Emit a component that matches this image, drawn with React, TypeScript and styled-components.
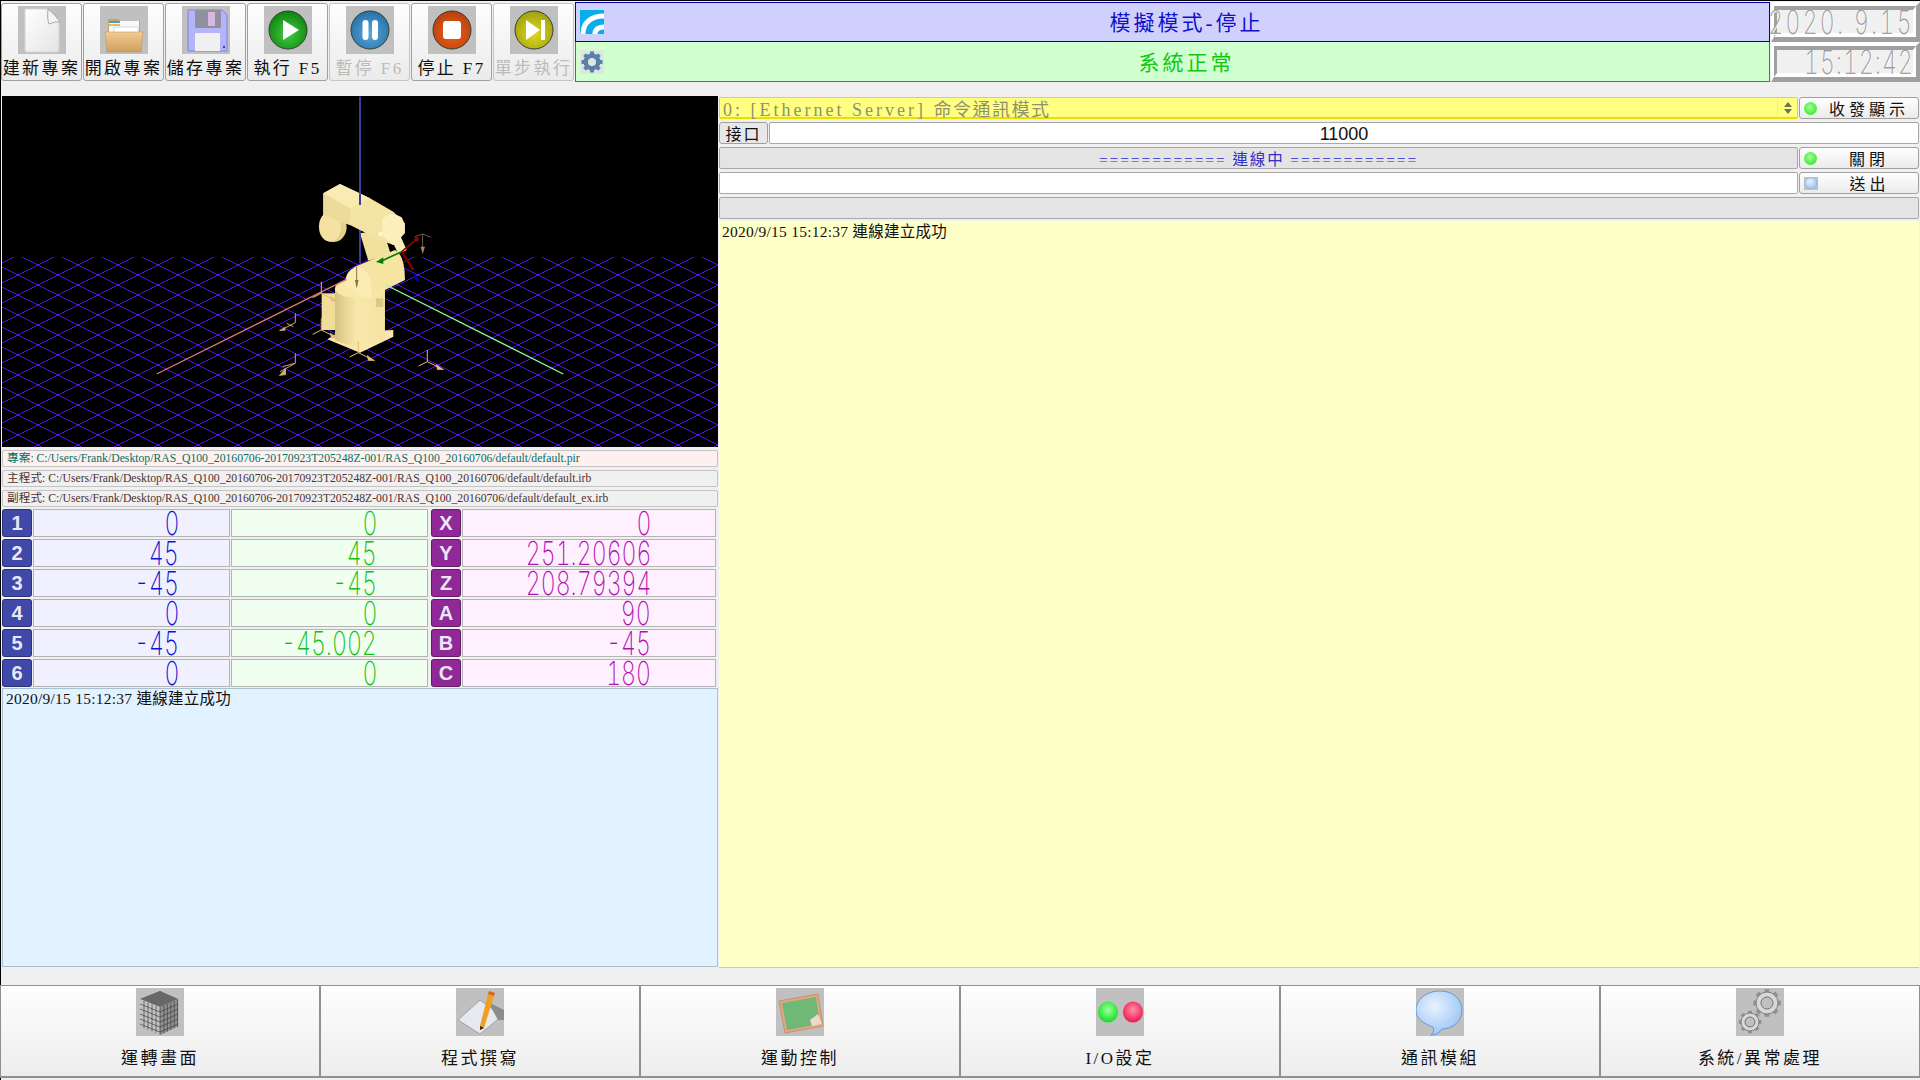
import React from 'react';
import styled, { createGlobalStyle } from 'styled-components';

const FONT = '"Liberation Serif", "Noto Sans CJK TC", serif';

const GlobalStyle = createGlobalStyle`
  html, body {
    margin: 0;
    padding: 0;
    background: #f0f0f0;
    overflow: hidden;
  }
  * { box-sizing: border-box; }
`;

const Page = styled.div`
  width: 1920px;
  height: 1080px;
  display: flex;
  flex-direction: column;
  background: #f0f0f0;
  font-family: ${FONT};
  border-left: 1px solid #000;
  border-top: 1px solid #000;
`;

/* ---- top bar ---- */
const TopBar = styled.div`
  height: 95px;
  display: flex;
  align-items: flex-start;
  flex: none;
`;

const ToolGroup = styled.div`
  display: flex;
  gap: 1px;
  padding-top: 2px;
`;

const ToolButton = styled.div<{ $disabled?: boolean }>`
  width: 81px;
  height: 78px;
  display: flex;
  flex-direction: column;
  align-items: center;
  padding-top: 2px;
  border: 1px solid ${p => (p.$disabled ? '#c4c4c4' : '#a0a0a0')};
  border-radius: 3px;
  background: linear-gradient(#fefefe, #ebebeb);
  color: ${p => (p.$disabled ? '#bbbbbb' : '#101010')};
  font-size: 17px;
  line-height: 20px;
  letter-spacing: 2.4px;
  white-space: nowrap;
  overflow: hidden;
`;

const IconBox = styled.div<{ $gap?: number }>`
  width: 48px;
  height: 48px;
  background: #c0c0c0;
  flex: none;
  margin-bottom: ${p => p.$gap ?? 3}px;
  svg { display: block; }
`;

const StatusColumn = styled.div`
  width: 1196px;
  margin-left: 1px;
  padding-top: 1px;
  display: flex;
  flex-direction: column;
`;

const StatusBar = styled.div<{ $tone: 'blue' | 'green' }>`
  height: 40px;
  display: flex;
  align-items: center;
  padding-left: 4px;
  border: 1px solid ${p => (p.$tone === 'blue' ? '#0000b0' : '#00b000')};
  border-width: ${p => (p.$tone === 'blue' ? '1px' : '0 1px 1px')};
  background: ${p => (p.$tone === 'blue' ? '#d0d0ff' : '#d0ffd0')};
  color: ${p => (p.$tone === 'blue' ? '#1010c8' : '#10c810')};
  font-size: 21px;
  letter-spacing: 3px;
`;

const StatusText = styled.div`
  flex: 1;
  text-align: center;
  padding-bottom: 2px;
`;

const ClockColumn = styled.div`
  margin-left: 1px;
  padding-top: 1px;
  width: 149px;
  display: flex;
  flex-direction: column;
`;

const ClockFrame = styled.div`
  height: 40px;
  border-style: solid;
  border-width: 4px 4px 5px 3px;
  border-color: #ffffff #a0a0a0 #a0a0a0 #ffffff;
`;

const Clock = styled.div`
  height: 100%;
  display: flex;
  align-items: center;
  justify-content: flex-end;
  border-style: solid;
  border-width: 4px 3px 4px 3px;
  border-color: #a0a0a0 #ffffff #ffffff #a0a0a0;
`;

const LcdText = styled.span<{ $color: string; $size?: number; $spacing?: number; $inset?: number }>`
  display: inline-block;
  font-family: Inter, "Liberation Sans", sans-serif;
  font-weight: 200;
  font-variant-numeric: tabular-nums;
  font-size: ${p => p.$size ?? 33}px;
  line-height: 26px;
  letter-spacing: ${p => p.$spacing ?? 0}px;
  margin-right: ${p => p.$inset ?? 0}px;
  color: ${p => p.$color};
  transform: scaleX(0.7);
  transform-origin: right center;
  white-space: pre;
`;

const ClockDigits = styled(LcdText)`
  text-shadow: 1px 1px 0 #ffffff;
`;

/* ---- main ---- */
const Main = styled.div`
  flex: none;
  height: 872px;
  display: flex;
  padding-left: 1px;
`;

const LeftColumn = styled.div`
  width: 716px;
  display: flex;
  flex-direction: column;
`;

const ViewPort = styled.div`
  height: 351px;
  background: #000;
  flex: none;
  svg { display: block; }
`;

const PathList = styled.div`
  display: flex;
  flex-direction: column;
  gap: 3px;
  padding-top: 3px;
`;

const PathRow = styled.div<{ $bg: string; $color: string }>`
  height: 17px;
  line-height: 15px;
  padding-left: 4px;
  border: 1px solid #c4c4c4;
  border-radius: 2px;
  background: ${p => p.$bg};
  color: ${p => p.$color};
  font-size: 11.7px;
  white-space: nowrap;
  overflow: hidden;
`;

const AxisTable = styled.div`
  display: grid;
  grid-template-columns: 30px 197px 197px 32px 254px;
  grid-auto-rows: 28px;
  column-gap: 1px;
  row-gap: 2px;
  padding-top: 2px;
`;

const AxisBadge = styled.div<{ $bg: string }>`
  width: 30px;
  justify-self: end;
  display: flex;
  align-items: center;
  justify-content: center;
  background: ${p => p.$bg};
  border: 1px solid rgba(0, 0, 0, 0.3);
  border-radius: 3px;
  color: #e8e8f4;
  font-family: "Liberation Sans", sans-serif;
  font-weight: 700;
  font-size: 20px;
`;

const AxisCell = styled.div<{ $bg: string; $pad: number }>`
  display: flex;
  align-items: center;
  justify-content: flex-end;
  padding-right: ${p => p.$pad}px;
  background: ${p => p.$bg};
  border: 1px solid #b4b4b4;
`;

const LeftLog = styled.div`
  height: 279px;
  margin-top: 1px;
  padding: 1px 3px;
  background: #e2f2ff;
  border: 1px solid #a8c0d0;
  font-size: 15.5px;
  letter-spacing: 0.25px;
  line-height: 18px;
  color: #101010;
`;

const RightColumn = styled.div`
  width: 1200px;
  margin-left: 1px;
  padding-top: 1px;
  display: flex;
  flex-direction: column;
  gap: 3px;
`;

const Row = styled.div`
  height: 22px;
  display: flex;
  align-items: stretch;
  gap: 1px;
  flex: none;
`;

const SelectBox = styled.div`
  flex: 1;
  display: flex;
  align-items: center;
  padding-left: 3px;
  border: 1px solid #d8d060;
  border-bottom: 2px solid #e8e000;
  border-radius: 2px;
  background: #ffff80;
  color: #909070;
  font-size: 18px;
  letter-spacing: 1.5px;
  white-space: nowrap;
`;

const SelectLabel = styled.span`
  flex: 1;
`;

const SelectLatin = styled.span`
  letter-spacing: 3px;
`;

const SelectArrows = styled.span`
  width: 20px;
  height: 100%;
  display: flex;
  align-items: center;
  justify-content: center;
  border-left: 1px solid #eeee90;
`;

const SideButton = styled.div`
  width: 120px;
  flex: none;
  display: flex;
  align-items: center;
  padding-left: 4px;
  border: 1px solid #a0a0a0;
  border-radius: 3px;
  background: linear-gradient(#fefefe, #ebebeb);
  font-size: 16px;
  color: #101010;
`;

const SideLabel = styled.span`
  flex: 1;
  text-align: center;
  padding-left: 3px;
  letter-spacing: 4px;
  white-space: nowrap;
`;

const Led = styled.span`
  width: 13px;
  height: 13px;
  border-radius: 50%;
  background: radial-gradient(circle at 45% 40%, #a0ff90, #20e020);
  flex: none;
`;

const PortLabel = styled.div`
  width: 49px;
  flex: none;
  display: flex;
  align-items: center;
  justify-content: center;
  border: 1px solid #a0a0a0;
  border-radius: 3px;
  background: #e8e8e8;
  font-size: 16px;
  letter-spacing: 2px;
  color: #101010;
`;

const Field = styled.div<{ $grey?: boolean }>`
  flex: 1;
  display: flex;
  align-items: center;
  justify-content: center;
  border: 1px solid #a8a8a8;
  border-radius: 2px;
  background: ${p => (p.$grey ? '#e4e4e4' : '#ffffff')};
  color: #3030c8;
  font-size: 15.5px;
  letter-spacing: 1.9px;
  white-space: nowrap;
`;

const PortValue = styled.span`
  font-family: "Liberation Sans", sans-serif;
  font-size: 18px;
  letter-spacing: 0;
  color: #101010;
  padding-top: 2px;
`;

const RightLog = styled.div`
  height: 748px;
  margin-top: -1px;
  padding: 1px 3px 0;
  background: #ffffc8;
  border-bottom: 1px solid #d0d080;
  font-size: 15.5px;
  letter-spacing: 0.25px;
  line-height: 20px;
  color: #101010;
`;

/* ---- bottom tabs ---- */
const TabBar = styled.div`
  flex: none;
  height: 93px;
  margin-top: 17px;
  display: grid;
  grid-template-columns: repeat(6, 1fr);
  margin-left: -1px;
`;

const TabButton = styled.div`
  display: flex;
  flex-direction: column;
  align-items: center;
  padding-top: 2px;
  border: 1px solid #909090;
  border-bottom-width: 2px;
  background: linear-gradient(#fefefe, #ededed);
  font-size: 17px;
  letter-spacing: 2.5px;
  color: #101010;
  white-space: nowrap;
`;

const TabLabel = styled.div`
  margin-top: 10px;
  line-height: 20px;
`;

/* ---- drawings ---- */
const Defs = () => (
  <svg width="0" height="0" style={{ position: 'absolute' }}>
    <defs>
      <linearGradient id="shade" x1="0" x2="1" y1="0" y2="0">
        <stop offset="0" stopColor="#d4c080" />
        <stop offset="0.2" stopColor="#e8d694" />
        <stop offset="0.45" stopColor="#f8e8aa" />
        <stop offset="1" stopColor="#f4e2a2" />
      </linearGradient>
      <radialGradient id="green" cx="0.5" cy="0.6" r="0.6">
        <stop offset="0" stopColor="#40d040" />
        <stop offset="1" stopColor="#108010" />
      </radialGradient>
      <radialGradient id="blue" cx="0.5" cy="0.6" r="0.6">
        <stop offset="0" stopColor="#58a8d8" />
        <stop offset="1" stopColor="#2870a8" />
      </radialGradient>
      <radialGradient id="orange" cx="0.5" cy="0.6" r="0.6">
        <stop offset="0" stopColor="#f06010" />
        <stop offset="1" stopColor="#b84010" />
      </radialGradient>
      <radialGradient id="olive" cx="0.5" cy="0.6" r="0.6">
        <stop offset="0" stopColor="#e0d820" />
        <stop offset="1" stopColor="#a0a010" />
      </radialGradient>
      <linearGradient id="paper" x1="0" x2="1" y1="0" y2="1">
        <stop offset="0" stopColor="#ffffff" />
        <stop offset="1" stopColor="#e4e4e4" />
      </linearGradient>
      <linearGradient id="folder" x1="0" x2="0" y1="0" y2="1">
        <stop offset="0" stopColor="#f0cc90" />
        <stop offset="1" stopColor="#d0a060" />
      </linearGradient>
      <radialGradient id="bubble" cx="0.4" cy="0.35" r="0.7">
        <stop offset="0" stopColor="#e8f2ff" />
        <stop offset="1" stopColor="#98c4f4" />
      </radialGradient>
      <radialGradient id="ledg" cx="0.5" cy="0.4" r="0.6">
        <stop offset="0" stopColor="#a0ffa0" />
        <stop offset="1" stopColor="#10e020" />
      </radialGradient>
      <radialGradient id="ledr" cx="0.5" cy="0.4" r="0.6">
        <stop offset="0" stopColor="#ff90a8" />
        <stop offset="1" stopColor="#f01850" />
      </radialGradient>
    </defs>
  </svg>
);

const Svg48: React.FC<{ children: React.ReactNode }> = ({ children }) => (
  <svg width="48" height="48" viewBox="0 0 48 48">{children}</svg>
);

const NewIcon = () => (
  <Svg48>
    <path d="M7 3H30L41 14V44Q41 46 39 46H9Q7 46 7 44Z" fill="url(#paper)" stroke="#d4d4d4" />
    <path d="M30 3Q29 14 31 18Q37 15 42 16Q36 7 30 3Z" fill="#f4f4f4" stroke="#a8a8a8" />
  </Svg48>
);

const OpenIcon = () => (
  <Svg48>
    <path d="M8 13H18L20 15H40V30H8Z" fill="#c8a468" />
    <rect x="9" y="15" width="30" height="16" fill="#f8f8f8" />
    <rect x="9" y="15" width="11" height="2" fill="#40a0d8" />
    <rect x="9" y="18" width="11" height="2" fill="#e8c050" />
    <rect x="14" y="21" width="24" height="6" fill="#ffffff" stroke="#d8d8d8" />
    <path d="M5 26H43L41 46H7Z" fill="url(#folder)" stroke="#b89058" strokeWidth="0.5" />
  </Svg48>
);

const SaveIcon = () => (
  <Svg48>
    <path d="M6 4H40L45 9V45H6Z" fill="#b4b4f8" stroke="#8080e0" />
    <rect x="13" y="4" width="26" height="18" fill="#9090a0" />
    <rect x="26" y="6" width="7" height="14" fill="#d8b8e0" />
    <rect x="13" y="27" width="25" height="18" fill="#f0f0f0" />
    <circle cx="42" cy="41" r="1.2" fill="#4040b0" />
  </Svg48>
);

const RoundIcon: React.FC<{ fill: string; children: React.ReactNode }> = ({ fill, children }) => (
  <Svg48>
    <circle cx="24" cy="24" r="19" fill={`url(#${fill})`} stroke="#304030" strokeWidth="1" />
    {children}
  </Svg48>
);

const PlayIcon = () => (
  <RoundIcon fill="green">
    <path d="M19 14L35 24L19 34Z" fill="#fff" />
  </RoundIcon>
);
const PauseIcon = () => (
  <RoundIcon fill="blue">
    <rect x="16.5" y="14" width="6" height="20" rx="3" fill="#fff" />
    <rect x="26" y="14" width="6" height="20" rx="3" fill="#fff" />
  </RoundIcon>
);
const StopIcon = () => (
  <RoundIcon fill="orange">
    <rect x="15" y="15" width="18" height="18" rx="3" fill="#fff" />
  </RoundIcon>
);
const StepIcon = () => (
  <RoundIcon fill="olive">
    <path d="M16 14L30 24L16 34Z" fill="#fff" />
    <rect x="31" y="14" width="4" height="20" fill="#fff" />
  </RoundIcon>
);

const WifiBadge = () => (
  <svg width="24" height="24" viewBox="0 0 24 24" style={{ flex: 'none' }}>
    <rect width="24" height="24" fill="#08aeea" />
    <path d="M3 24C3 12 12 6 24 6" stroke="#fff" strokeWidth="5" fill="none" />
    <path d="M15 24C15 19 19 17 24 17" stroke="#fff" strokeWidth="5" fill="none" />
  </svg>
);

const GearBadge = () => (
  <svg width="24" height="24" viewBox="0 0 24 24" style={{ flex: 'none' }}>
    <rect width="24" height="24" fill="#dfe8df" />
    <circle cx="12" cy="12" r="6.5" fill="none" stroke="#5880a8" strokeWidth="4" />
    {[0, 45, 90, 135].map(a => (
      <rect key={a} x="10" y="1.5" width="4" height="21" fill="#5880a8" transform={`rotate(${a} 12 12)`} />
    ))}
    <circle cx="12" cy="12" r="4" fill="#dfe8df" />
  </svg>
);

const CubeIcon = () => (
  <Svg48>
    <path d="M24 3L42 11V38L24 47L4 38V11Z" fill="#8a8a8a" />
    <path d="M24 3L42 11L24 19L4 11Z" fill="#686868" />
    <path d="M4 11L24 19V47L4 38Z" fill="#c4c4c4" />
    <path d="M24 19L42 11V38L24 47Z" fill="#909090" />
    {[0, 1, 2, 3, 4].map(i => (
      <g key={i} stroke="#404040" strokeWidth="0.7">
        <path d={`M4 ${16 + i * 5}L24 ${24 + i * 5}L42 ${16 + i * 5}`} fill="none" />
        <path d={`M${8 + i * 4} ${13 + i * 1.6}V${40 + i * 1.6}`} />
        <path d={`M${28 + i * 3.4} ${17.5 - i * 1.5}V${45 - i * 1.5}`} />
      </g>
    ))}
  </Svg48>
);

const PencilIcon = () => (
  <Svg48>
    <path d="M2 32L24 12L46 28L24 46Z" fill="#e8e8f0" stroke="#a0a0a8" />
    <path d="M32 14L48 22V32L42 32Z" fill="#8c8c8c" />
    <path d="M24 38L32 6L38 8L28 40L24 42Z" fill="#f0a020" />
    <path d="M33 3L39 5L38 8L32 6Z" fill="#e06020" />
    <path d="M24 38L28 40L24 42Z" fill="#303030" />
  </Svg48>
);

const BoardIcon = () => (
  <Svg48>
    <path d="M3 13L42 6L47 38L9 45Z" fill="#e0a880" stroke="#c89070" />
    <path d="M6 15L40 9L44 36L11 42Z" fill="#70b878" />
    <path d="M34 32L42 26L46 36L36 38Z" fill="#f0d8c8" />
  </Svg48>
);

const IoIcon = () => (
  <Svg48>
    <ellipse cx="12" cy="24" rx="10" ry="10.5" fill="url(#ledg)" />
    <ellipse cx="37" cy="24" rx="10" ry="10.5" fill="url(#ledr)" />
  </Svg48>
);

const BubbleIcon = () => (
  <Svg48>
    <path d="M24 3C38 3 46 12 46 22C46 33 37 41 26 41C24 44 20 47 15 47C18 44 18 41 17 39C8 36 0 31 0 22C0 12 10 3 24 3Z" fill="url(#bubble)" stroke="#6898d8" />
  </Svg48>
);

const Cog: React.FC<{ cx: number; cy: number; r: number }> = ({ cx, cy, r }) => (
  <g>
    {[0, 45, 90, 135].map(a => (
      <rect key={a} x={cx - r * 0.22} y={cy - r * 1.25} width={r * 0.44} height={r * 2.5} fill="#909090" transform={`rotate(${a} ${cx} ${cy})`} />
    ))}
    <circle cx={cx} cy={cy} r={r} fill="#d8d8d8" stroke="#808080" />
    <circle cx={cx} cy={cy} r={r * 0.55} fill="#c0c0c0" stroke="#707070" />
  </g>
);

const GearsIcon = () => (
  <Svg48>
    <Cog cx={31} cy={15} r={11} />
    <Cog cx={14} cy={34} r={9} />
  </Svg48>
);

// ground grid, page coordinates, one crossing at (118, 265)
const gridOffsets = Array.from({ length: 60 }, (_, i) => i - 30);

const Gizmo: React.FC<{ x: number; y: number }> = ({ x, y }) => (
  <g stroke="#e8b880" strokeWidth="3" fill="none">
    <path d={`M${x} ${y}V${y - 35}`} />
    <path d={`M${x} ${y}L${x - 26} ${y + 13}`} />
    <path d={`M${x} ${y}L${x + 32} ${y + 16}`} />
    <path d={`M${x + 26} ${y + 8}L${x + 50} ${y + 24}L${x + 30} ${y + 24}Z`} fill="#e8b880" strokeWidth="1" />
  </g>
);

// robot: drawn in the 3x coordinates of a crop that starts at (100, 130)
const RobotView = () => (
  <svg width="716" height="351" viewBox="2 96 716 351">
    <defs>
      <clipPath id="floor">
        <rect x="2" y="257" width="716" height="190" />
      </clipPath>
    </defs>
    <g clipPath="url(#floor)" stroke="#4a12d8" strokeWidth="1" shapeRendering="crispEdges">
      {gridOffsets.map(i => (
        <g key={i}>
          <line x1="0" y1={206 + i * 20} x2="720" y2={566 + i * 20} />
          <line x1="0" y1={324 + i * 20} x2="720" y2={-36 + i * 20} />
        </g>
      ))}
    </g>
    <g transform="translate(100 130) scale(0.3333)">
      <line x1="780" y1="-100" x2="780" y2="400" stroke="#3c3c98" strokeWidth="6" />
      <path d="M682 628L712 610L880 600V620L780 668Z" fill="#f8e6aa" />
      <rect x="665" y="490" width="45" height="110" fill="#efdd98" />
      <path d="M705 475H855V630Q780 665 705 630Z" fill="url(#shade)" />
      <ellipse cx="780" cy="475" rx="75" ry="30" fill="#f8e8aa" />
      <rect x="828" y="505" width="22" height="26" fill="#dcc888" />
      <path d="M780 310L850 300L872 372L805 392Z" fill="#f2e09e" />
      <path d="M875 330L900 315L920 360L895 372Z" fill="#fbeeb8" />
      <path d="M765 410L885 360Q915 375 915 450L815 500L740 440Z" fill="#f6e4a2" />
      <path d="M735 465Q735 420 770 410Q810 420 815 465V505Q770 500 735 465Z" fill="#fbecb4" />
      <ellipse cx="700" cy="292" rx="40" ry="44" fill="#e4d08c" />
      <ellipse cx="690" cy="290" rx="33" ry="45" fill="#f4e2a2" />
      <path d="M670 190L720 162L810 205L880 245L915 280V310L880 345L840 330L750 285L670 255Z" fill="#f4e4a4" />
      <path d="M670 190L720 162L810 205L750 235Z" fill="#f9ebb2" />
      <path d="M750 235V285L670 255V190Z" fill="#ecdb9a" />
      <path d="M845 270Q870 240 905 262Q925 295 895 335L880 345L850 320Z" fill="#fcefbc" />
      <circle cx="842" cy="312" r="7" fill="#fff8d0" />
      <line x1="780" y1="190" x2="780" y2="225" stroke="#3c3c98" strokeWidth="6" />
      <line x1="780" y1="310" x2="780" y2="395" stroke="#3c3c98" strokeWidth="6" />
      <line x1="170" y1="732" x2="740" y2="448" stroke="#e07878" strokeWidth="4" />
      <line x1="858" y1="465" x2="1390" y2="732" stroke="#90ff98" strokeWidth="4" />
      <line x1="905" y1="365" x2="840" y2="395" stroke="#008000" strokeWidth="5" />
      <path d="M828 396L850 382L850 402Z" fill="#008000" />
      <line x1="905" y1="365" x2="950" y2="328" stroke="#900000" strokeWidth="5" />
      <circle cx="950" cy="328" r="7" fill="#900000" />
      <line x1="905" y1="365" x2="940" y2="420" stroke="#800000" strokeWidth="7" />
      <path d="M940 425L960 452L945 452Z" fill="#0000a0" />
      <line x1="770" y1="410" x2="770" y2="470" stroke="#907040" strokeWidth="3" />
      <path d="M765 450H776L770 475Z" fill="#907040" />
      <path d="M968 312V370M945 320L968 312L992 322" stroke="#a08868" strokeWidth="2" fill="none" />
      <path d="M962 350H975L968 372Z" fill="#a08868" />
      <Gizmo x={664} y={490} />
      <Gizmo x={664} y={600} />
      <Gizmo x={775} y={668} />
      <Gizmo x={982} y={695} />
      <path d="M586 550V578L540 602M560 580L580 590" stroke="#c8a878" strokeWidth="3" fill="none" />
      <path d="M536 602L556 590V602Z" fill="#c8a878" />
      <path d="M586 670V700L540 725M548 710L584 700" stroke="#c8a878" strokeWidth="3" fill="none" />
      <path d="M536 738L558 712V735Z" fill="#c8a878" />
    </g>
  </svg>
);

const SmallBubble = () => (
  <svg width="14" height="13" viewBox="0 0 14 13" style={{ flex: 'none' }}>
    <rect width="14" height="13" fill="#c0c0c0" />
    <ellipse cx="7" cy="6" rx="6" ry="5.5" fill="url(#bubble)" stroke="#80a8e0" strokeWidth="0.5" />
  </svg>
);

const tools = [
  { label: '建新專案', icon: <NewIcon /> },
  { label: '開啟專案', icon: <OpenIcon /> },
  { label: '儲存專案', icon: <SaveIcon /> },
  { label: '執行 F5', icon: <PlayIcon /> },
  { label: '暫停 F6', icon: <PauseIcon />, disabled: true },
  { label: '停止 F7', icon: <StopIcon /> },
  { label: '單步執行', icon: <StepIcon />, disabled: true },
];

const axes = [
  { id: '1', a: '0', b: '0', name: 'X', c: '0' },
  { id: '2', a: '45', b: '45', name: 'Y', c: '251.20606' },
  { id: '3', a: '-45', b: '-45', name: 'Z', c: '208.79394' },
  { id: '4', a: '0', b: '0', name: 'A', c: '90' },
  { id: '5', a: '-45', b: '-45.002', name: 'B', c: '-45' },
  { id: '6', a: '0', b: '0', name: 'C', c: '180' },
];

const tabs = [
  { label: '運轉畫面', icon: <CubeIcon /> },
  { label: '程式撰寫', icon: <PencilIcon /> },
  { label: '運動控制', icon: <BoardIcon /> },
  { label: 'I/O設定', icon: <IoIcon /> },
  { label: '通訊模組', icon: <BubbleIcon /> },
  { label: '系統/異常處理', icon: <GearsIcon /> },
];

const BASE_PATH = 'C:/Users/Frank/Desktop/RAS_Q100_20160706-20170923T205248Z-001/RAS_Q100_20160706/default/';

const App: React.FC = () => (
  <Page>
    <GlobalStyle />
    <Defs />
    <TopBar>
      <ToolGroup>
        {tools.map(t => (
          <ToolButton key={t.label} $disabled={t.disabled}>
            <IconBox $gap={5}>{t.icon}</IconBox>
            {t.label}
          </ToolButton>
        ))}
      </ToolGroup>
      <StatusColumn>
        <StatusBar $tone="blue">
          <WifiBadge />
          <StatusText>模擬模式-停止</StatusText>
        </StatusBar>
        <StatusBar $tone="green">
          <GearBadge />
          <StatusText>系統正常</StatusText>
        </StatusBar>
      </StatusColumn>
      <ClockColumn>
        <ClockFrame>
          <Clock>
            <ClockDigits $color="#a0a0a0" $size={33} $spacing={3.2} $inset={-1}>2020. 9.15</ClockDigits>
          </Clock>
        </ClockFrame>
        <ClockFrame>
          <Clock>
            <ClockDigits $color="#a0a0a0" $size={33} $spacing={1.4} $inset={-1}>15:12:42</ClockDigits>
          </Clock>
        </ClockFrame>
      </ClockColumn>
    </TopBar>
    <Main>
      <LeftColumn>
        <ViewPort>
          <RobotView />
        </ViewPort>
        <PathList>
          <PathRow $bg="#fff0f0" $color="#007060">專案: {BASE_PATH}default.pir</PathRow>
          <PathRow $bg="#f0f0f0" $color="#503030">主程式: {BASE_PATH}default.irb</PathRow>
          <PathRow $bg="#f0f0f0" $color="#503030">副程式: {BASE_PATH}default_ex.irb</PathRow>
        </PathList>
        <AxisTable>
          {axes.map(r => (
            <React.Fragment key={r.id}>
              <AxisBadge $bg="#4048a8">{r.id}</AxisBadge>
              <AxisCell $bg="#f0f0ff" $pad={50}>
                <LcdText $color="#1010d0">{r.a}</LcdText>
              </AxisCell>
              <AxisCell $bg="#f0fff0" $pad={50}>
                <LcdText $color="#10c010">{r.b}</LcdText>
              </AxisCell>
              <AxisBadge $bg="#902898">{r.name}</AxisBadge>
              <AxisCell $bg="#fff0ff" $pad={64}>
                <LcdText $color="#b010b0">{r.c}</LcdText>
              </AxisCell>
            </React.Fragment>
          ))}
        </AxisTable>
        <LeftLog>2020/9/15 15:12:37 連線建立成功</LeftLog>
      </LeftColumn>
      <RightColumn>
        <Row>
          <SelectBox>
            <SelectLabel>
              <SelectLatin>0: [Ethernet Server] </SelectLatin>命令通訊模式
            </SelectLabel>
            <SelectArrows>
              <svg width="8" height="12" viewBox="0 0 8 12">
                <path d="M4 0L8 5H0ZM0 7H8L4 12Z" fill="#707060" />
              </svg>
            </SelectArrows>
          </SelectBox>
          <SideButton>
            <Led />
            <SideLabel>收發顯示</SideLabel>
          </SideButton>
        </Row>
        <Row>
          <PortLabel>接口</PortLabel>
          <Field>
            <PortValue>11000</PortValue>
          </Field>
        </Row>
        <Row>
          <Field $grey>============ 連線中 ============</Field>
          <SideButton>
            <Led />
            <SideLabel>關閉</SideLabel>
          </SideButton>
        </Row>
        <Row>
          <Field />
          <SideButton>
            <SmallBubble />
            <SideLabel>送出</SideLabel>
          </SideButton>
        </Row>
        <Row>
          <Field $grey />
        </Row>
        <RightLog>2020/9/15 15:12:37 連線建立成功</RightLog>
      </RightColumn>
    </Main>
    <TabBar>
      {tabs.map(t => (
        <TabButton key={t.label}>
          <IconBox>{t.icon}</IconBox>
          <TabLabel>{t.label}</TabLabel>
        </TabButton>
      ))}
    </TabBar>
  </Page>
);

export default App;
